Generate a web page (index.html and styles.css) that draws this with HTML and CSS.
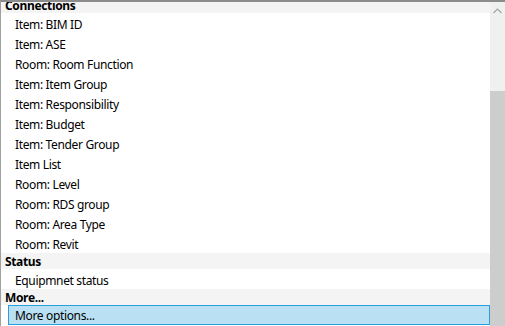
FILE: index.html
```html
<!DOCTYPE html>
<html lang="en">
<head>
  <meta charset="UTF-8" />
  <title>Properties list</title>
  <link rel="stylesheet" href="styles.css">
</head>
<body>

<div class="frame">
  <div class="list">
    <div class="rows">
      <div class="group">Connections</div>
      <div class="item">Item: BIM ID</div>
      <div class="item">Item: ASE</div>
      <div class="item">Room: Room Function</div>
      <div class="item">Item: Item Group</div>
      <div class="item">Item: Responsibility</div>
      <div class="item">Item: Budget</div>
      <div class="item">Item: Tender Group</div>
      <div class="item">Item List</div>
      <div class="item">Room: Level</div>
      <div class="item">Room: RDS group</div>
      <div class="item">Room: Area Type</div>
      <div class="item">Room: Revit</div>
      <div class="group">Status</div>
      <div class="item">Equipmnet status</div>
      <div class="group">More...</div>
      <div class="item selected">More options...</div>
    </div>
  </div>

  <div class="scrollbar">
    <div class="sb-up">
      <svg width="9" height="6" viewBox="0 0 9 6"><path d="M0.5 5 L4.5 1 L8.5 5" fill="none" stroke="#a3a3a3" stroke-width="1.2"/></svg>
    </div>
    <div class="sb-thumb"></div>
  </div>
</div>

</body>
</html>
```

FILE: styles.css
```css
body { margin: 0; background: #fff; font-family: "Noto Sans", sans-serif; font-size: 12px; color: #000; letter-spacing: -0.35px; }

.frame {
  display: flex;
  height: 324px;
  border-top: 2px solid #8c8c8c;
  border-left: 1px solid #a0a0a0;
}
.list { flex: 1; overflow: hidden; }
.rows { margin-top: -5px; }

.group {
  box-sizing: border-box;
  height: 16px;
  padding-top: 2px;
  line-height: 14px;
  padding-left: 4px;
  font-weight: bold;
  background: #f4f4f4;
}
.item {
  box-sizing: border-box;
  height: 20px;
  padding-top: 3px;
  line-height: 17px;
  padding-left: 14px;
}
.item.selected {
  margin-left: 7px;
  padding-left: 6px;
  padding-top: 2px;
  line-height: 16px;
  background: #b9e1f3;
  border: 1px solid #2a9fdc;
}

.scrollbar {
  width: 15px;
  background: #f0f0f0;
  display: flex;
  flex-direction: column;
}
.sb-up {
  height: 17px;
  display: flex;
  align-items: center;
  justify-content: center;
}
.sb-thumb {
  margin-top: 72px;
  flex: 1;
  background: #cdcdcd;
}
```
